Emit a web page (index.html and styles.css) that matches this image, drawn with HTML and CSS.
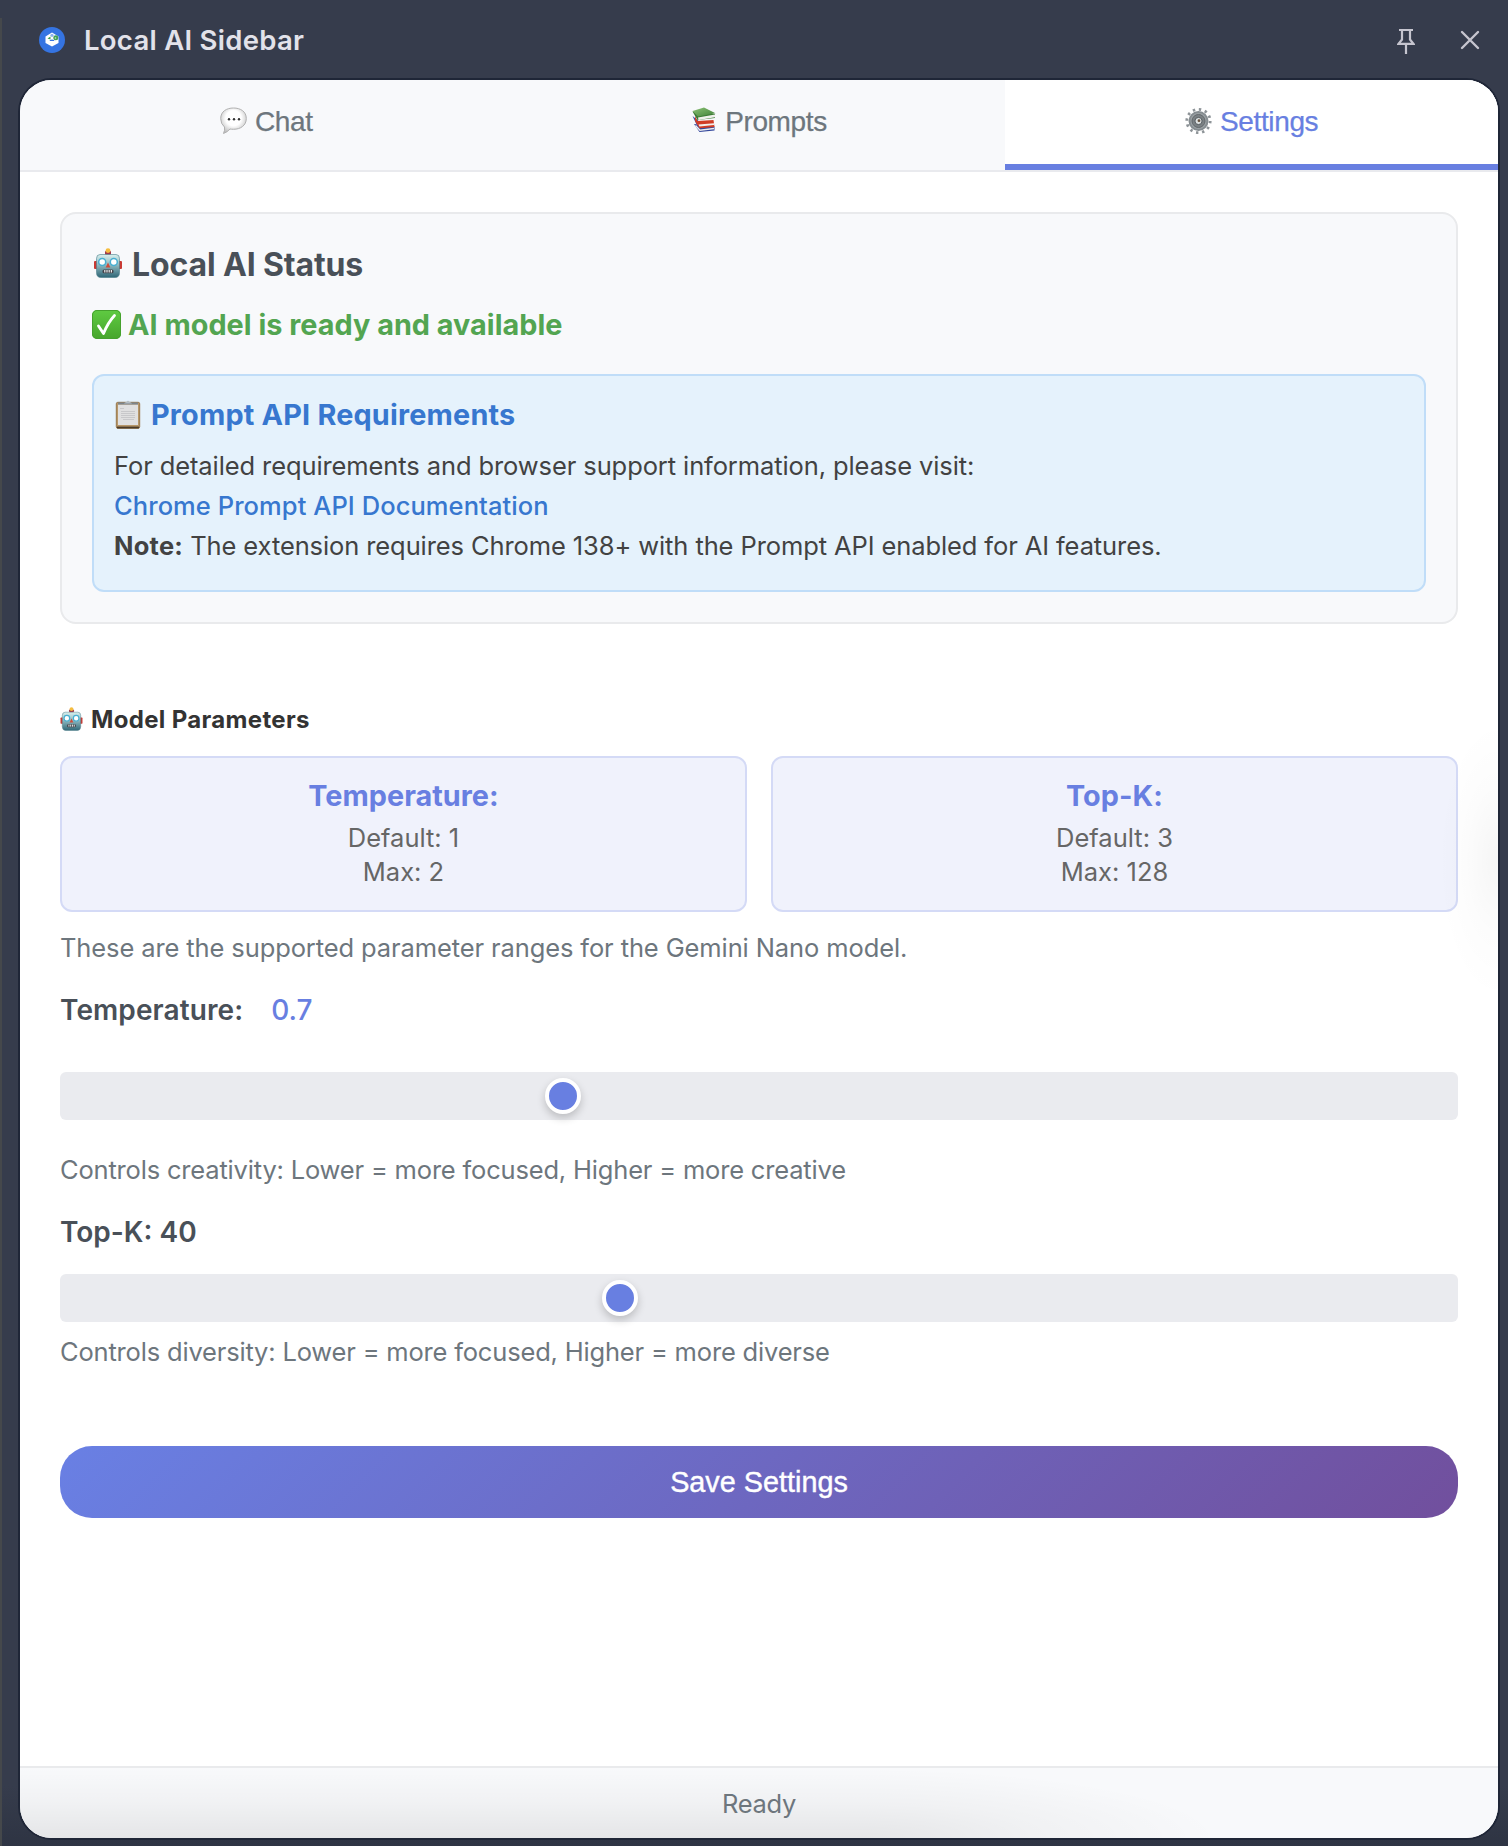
FILE: index.html
```
<!DOCTYPE html>
<html lang="en">
<head>
<meta charset="utf-8">
<title>Local AI Sidebar</title>
<link rel="stylesheet" href="styles.css">
</head>
<body>
<svg class="defs" width="0" height="0">
  <defs>
    <linearGradient id="face" x1="0" y1="0" x2="0" y2="1"><stop offset="0" stop-color="#d9f0ee"/><stop offset=".45" stop-color="#8fb9c0"/><stop offset="1" stop-color="#2f6676"/></linearGradient>
    <linearGradient id="green" x1="0" y1="0" x2="0" y2="1"><stop offset="0" stop-color="#5fcb42"/><stop offset="1" stop-color="#47a52c"/></linearGradient>
    <radialGradient id="bubble" cx=".5" cy=".4" r=".6"><stop offset=".5" stop-color="#fff"/><stop offset="1" stop-color="#c0c0c0"/></radialGradient>
    <linearGradient id="book" x1="0" y1="0" x2="1" y2="1"><stop offset="0" stop-color="#8cc276"/><stop offset="1" stop-color="#3f8136"/></linearGradient>
    <symbol id="robot" viewBox="0 0 28 30">
      <rect x="0" y="13" width="4" height="8" rx="1" fill="#c93a34"/><rect x="24" y="13" width="4" height="8" rx="1" fill="#c93a34"/>
      <rect x="11" y="3" width="6" height="4" rx="1" fill="#a23a4a"/><circle cx="14" cy="2.6" r="2.4" fill="#f5bd3e"/>
      <path d="M6 6.5h16q3.500 0 3.500 4v14q0 5-4.500 5h-14q-4.500 0-4.500-5v-14q0-4 3.500-4z" fill="url(#face)" stroke="#4b7d89" stroke-width=".6"/>
      <circle cx="8.200" cy="14" r="3.500" fill="#fff" stroke="#48afd2" stroke-width="1.500"/><circle cx="19.800" cy="14" r="3.500" fill="#fff" stroke="#48afd2" stroke-width="1.500"/>
      <path d="M14 14.500l2.300 5h-4.600z" fill="#d04a38"/>
      <rect x="8.500" y="21.500" width="11" height="3.800" rx="1.500" fill="#44434a"/><path d="M10.800 22v2.600M13 22v2.600M15.200 22v2.600M17.400 22v2.600" stroke="#e9eeee" stroke-width="1.200"/>
    </symbol>
  </defs>
</svg>

<div class="window">
  <header class="titlebar">
    <svg class="logo" viewBox="0 0 26 26"><circle cx="13" cy="13" r="13" fill="#3574e2"/><path d="M13 5.500l6.500 4v6.500L13 19.500 6.500 16V9.500z" fill="#fff"/><circle cx="13" cy="8.300" r="1.600" fill="#8bb3ee"/><path d="M11.500 9.500v3l-3-1z" fill="#3b9a50"/><circle cx="16.800" cy="10.700" r="2.500" fill="#43a057"/><circle cx="16.500" cy="11" r=".8" fill="#cfe8d4"/><path d="M10.500 14q0-1.500 2.500-1.500t2.500 1.500z" fill="#3574e2"/></svg>
    <h1 class="title">Local AI Sidebar</h1>
    <svg class="pin" viewBox="0 0 18 27"><path d="M2 2h14M5 2v9.500l-3.500 4.300h15L13 11.500V2M9 16V26" fill="none" stroke="#c6c5cf" stroke-width="2.200"/></svg>
    <svg class="close" viewBox="0 0 20 20"><path d="M2 2l16 16M18 2L2 18" stroke="#c6c5cf" stroke-width="2.400" stroke-linecap="round"/></svg>
  </header>

  <main class="panel">
    <nav class="tabs">
      <a class="tab">
        <svg class="tab-icon" viewBox="0 0 27 28"><path d="M13.500 1C20.500 1 26.300 4.500 26.300 11.500S20.500 22.300 13.500 22.300q-2 0-3.500-.3-2.500 3-6.500 4.500 1.500-3 1-6.500Q.700 17 .700 11.500C.700 4.500 6.500 1 13.500 1z" fill="url(#bubble)" stroke="#b0b0b0"/><circle cx="9" cy="12.300" r="1.200" fill="#333"/><circle cx="14" cy="12.300" r="1.200" fill="#333"/><circle cx="19" cy="12.300" r="1.200" fill="#333"/></svg>
        <span>Chat</span>
      </a>
      <a class="tab">
        <svg class="tab-icon tab-icon-books" viewBox="0 0 24 26"><path d="M2 17l5.500 8 15-1.500v-4z" fill="#33479c"/><path d="M3.500 18.500l4.500 4.700 14-1.700" fill="none" stroke="#eee" stroke-width="1.400"/><path d="M.500 9l4 8.500 4-2z" fill="#3b50a5"/><path d="M3 9l2.500 5 16-1 1 7-15 1.200L3 14z" fill="#d13c25"/><path d="M6.500 17.500l15.500-1.200v1.800L7.500 19.500z" fill="#f3eeea"/><path d="M.500 4.500l5 8.500 17.500-2V7z" fill="#3c7b35"/><path d="M6 10.500l17-3v2.800L6.500 13z" fill="#f0f1eb"/><path d="M.500 4L12 .500l11.500 5.800L6 9.500z" fill="url(#book)"/></svg>
        <span>Prompts</span>
      </a>
      <a class="tab tab-active">
        <svg class="tab-icon" viewBox="0 0 27 27"><circle cx="13.500" cy="13.500" r="11.700" fill="none" stroke="#8e9498" stroke-width="2.800" stroke-dasharray="2.400 3.726"/><circle cx="13.500" cy="13.500" r="9" fill="#9da3a6" stroke="#858c90" stroke-width="2"/><circle cx="13.500" cy="13.500" r="6.500" fill="#7b8184" stroke="#62686c"/><circle cx="13.500" cy="13.500" r="3.600" fill="#dce0e0" stroke="#555c60"/><circle cx="14" cy="13.200" r="1.400" fill="#67523e"/></svg>
        <span>Settings</span>
      </a>
    </nav>

    <div class="content">
      <section class="status-card">
        <h2 class="status-heading"><svg class="icon-robot" viewBox="0 0 28 30"><use href="#robot"/></svg><span>Local AI Status</span></h2>
        <p class="status-line"><svg class="icon-check" viewBox="0 0 29 29"><rect width="29" height="29" rx="5" fill="url(#green)"/><rect x=".5" y=".5" width="28" height="28" rx="4.500" fill="none" stroke="#45a12d"/><path d="M6.500 16l5 7.500Q16 12.500 22.500 5.500" fill="none" stroke="#fff" stroke-width="2.800" stroke-linecap="round" stroke-linejoin="round"/></svg><span>AI model is ready and available</span></p>
        <div class="requirements">
          <h3 class="req-title"><svg class="icon-clip" viewBox="0 0 26 29"><rect x="1.300" y="2.300" width="23.400" height="26" rx="1.500" fill="#b79769" stroke="#98774b"/><rect x="3" y="4.500" width="20" height="20.500" fill="#e0e0e0"/><path d="M2 27.500h22" stroke="#4b3a27" stroke-width="1.800"/><path d="M5 8.500h4M6 11.500h14M6 13.500h14M6 15.500h14M6 17.500h14M8 19.500h11" stroke="#c8c8ca"/><path d="M3 2.500h20v2H3z" fill="#7c858c"/><path d="M9 3.500q1-1.500 2.500-1.500 1.500-2.500 3 0 1.500 0 2.500 1.500z" fill="#b5bec4"/></svg><span>Prompt API Requirements</span></h3>
          <p class="req-text req-intro">For detailed requirements and browser support information, please visit:</p>
          <p class="req-text"><a class="req-link">Chrome Prompt API Documentation</a></p>
          <p class="req-text req-note"><strong>Note:</strong> The extension requires Chrome 138+ with the Prompt API enabled for AI features.</p>
        </div>
      </section>

      <h2 class="section-title"><svg class="icon-robot-small" viewBox="0 0 28 30"><use href="#robot"/></svg><span>Model Parameters</span></h2>
      <div class="params">
        <div class="param">
          <strong class="param-name">Temperature:</strong>
          <span class="param-value">Default: 1</span>
          <span class="param-value">Max: 2</span>
        </div>
        <div class="param">
          <strong class="param-name">Top-K:</strong>
          <span class="param-value">Default: 3</span>
          <span class="param-value">Max: 128</span>
        </div>
      </div>
      <p class="help help-ranges">These are the supported parameter ranges for the Gemini Nano model.</p>

      <div class="label"><span>Temperature:</span><span class="label-value">0.7</span></div>
      <div class="slider slider-temp"><span class="thumb" style="margin-left:485px"></span></div>
      <p class="help">Controls creativity: Lower = more focused, Higher = more creative</p>

      <div class="label label-topk">Top-K: 40</div>
      <div class="slider slider-topk"><span class="thumb" style="margin-left:542px"></span></div>
      <p class="help">Controls diversity: Lower = more focused, Higher = more diverse</p>

      <button class="save">Save Settings</button>
    </div>

    <footer class="statusbar">Ready</footer>
  </main>
</div>
</body>
</html>
```
FILE: styles.css
```
* { box-sizing: border-box; }
body { margin: 0; font-family: Inter, "Liberation Sans", sans-serif; }
h1, h2, h3, p { margin: 0; }
svg { display: block; flex: none; }
.defs { position: absolute; }

.window {
  height: 1846px;
  padding: 0 8px 6px 18px;
  display: flex;
  flex-direction: column;
  background:
    linear-gradient(#45484b, #45484b) 0 18px / 2px 100% no-repeat,
    linear-gradient(to top, #2e3443, #363c4c 60px);
}
.titlebar {
  height: 78px;
  padding: 2px 20px 0 21px;
  display: flex;
  align-items: center;
}
.logo { width: 26px; height: 26px; }
.title { flex: 1; margin-left: 19px; font-size: 27.500px; font-weight: 560; letter-spacing: .28px; line-height: 40px; color: #e2e2ea; }
.pin { width: 18px; height: 27px; margin: 2px 45px 0 0; }
.close { width: 20px; height: 20px; }

.panel {
  position: relative;
  flex: 1;
  display: flex;
  flex-direction: column;
  border: 2px solid #1f2637;
  border-radius: 34px;
  background: #fff;
  overflow: hidden;
}
/* soft window shadow along the right edge */
.panel::after {
  content: "";
  position: absolute;
  right: 0;
  top: 640px;
  width: 60px;
  height: 280px;
  background: radial-gradient(ellipse 60px 140px at 100% 50%, rgba(0,0,0,.04), rgba(0,0,0,.012) 55%, transparent);
}

.tabs { height: 92px; flex: none; display: grid; grid-template-columns: repeat(3, 1fr); border-bottom: 2px solid #e9eaee; background: #f8f9fb; }
.tab { display: flex; justify-content: center; align-items: flex-start; gap: 8px; padding-top: 26px; font-family: "Liberation Sans", Arial, sans-serif; font-size: 28px; letter-spacing: -.38px; line-height: 32px; color: #6d767d; -webkit-text-stroke: .25px currentColor; }
.tab-icon { width: 27px; height: 28px; margin-top: 1px; }
.tab-icon-books { width: 24px; height: 26px; margin: 1px 1px 0 1px; }
.tab-active { background: #fff; border-bottom: 6px solid #687fe1; color: #687fe1; }

.content { flex: 1; padding: 40px; }

.status-card { padding: 31px 30px 30px; border: 2px solid #e9eaec; border-radius: 16px; background: #f8f9fb; }
.status-heading { display: flex; align-items: center; gap: 10px; padding-left: 2px; font-size: 32px; font-weight: 700; letter-spacing: -.13px; line-height: 40px; color: #495058; }
.icon-robot { width: 28px; height: 30px; margin-top: -4px; }
.status-line { display: flex; align-items: center; gap: 7px; margin: 20px 0 29px; font-size: 28.800px; font-weight: 700; letter-spacing: .02px; line-height: 40px; color: #53a551; }
.icon-check { width: 29px; height: 29px; margin-top: -1px; }
.requirements { padding: 19px 20px 24px; border: 2px solid #c0ddf8; border-radius: 12px; background: #e5f2fc; color: #424242; }
.req-title { display: flex; align-items: center; gap: 10px; margin-bottom: 11px; padding-left: 1px; font-size: 28.800px; font-weight: 700; letter-spacing: .2px; line-height: 40px; color: #3777cf; }
.icon-clip { width: 26px; height: 29px; margin-top: -2px; }
.req-text { font-size: 25.500px; line-height: 40px; white-space: nowrap; }
.req-intro, .req-note { letter-spacing: -.1px; }
.req-note strong { letter-spacing: .25px; }
.req-link { font-weight: 500; letter-spacing: .07px; color: #3777cf; }

.section-title { display: flex; align-items: center; gap: 8px; margin: 81px 0 21px; font-size: 24px; font-weight: 700; letter-spacing: .33px; line-height: 30px; color: #333; }
.icon-robot-small { width: 23px; height: 24px; margin-top: -2px; }
.params { display: grid; grid-template-columns: 1fr 1fr; gap: 24px; }
.param { display: flex; flex-direction: column; align-items: center; height: 156px; padding-top: 20px; border: 2px solid #d4daf6; border-radius: 12px; background: #f0f2fc; }
.param-name { margin-bottom: 7px; font-size: 28.800px; font-weight: 700; letter-spacing: .03px; line-height: 36px; color: #687fe1; }
.param-value { font-size: 25.500px; line-height: 34px; color: #666; }

.help { font-size: 25.500px; letter-spacing: -.18px; line-height: 36px; color: #6d767d; white-space: nowrap; }
.help-ranges { margin-top: 18px; letter-spacing: -.11px; }
.label { display: flex; gap: 28px; margin-top: 26px; font-size: 28px; font-weight: 570; letter-spacing: .1px; line-height: 36px; color: #495058; }
.label-topk { letter-spacing: 0; }
.label-value { font-weight: 500; letter-spacing: 0; color: #687fe1; }
.slider { height: 48px; display: flex; align-items: center; border-radius: 6px; background: #eaebef; }
.slider-temp { margin: 44px 0 32px; }
.slider-topk { margin: 24px 0 12px; }
.thumb { width: 36px; height: 36px; border: 4px solid #fff; border-radius: 50%; background: #687fe1; box-shadow: 0 4px 8px rgba(0,0,0,.2); }

.save { display: block; width: 100%; height: 72px; margin-top: 76px; padding: 0; border: 0; border-radius: 32px; background: linear-gradient(135deg, #6980e4, #714f9d); color: #fff; font-family: "Liberation Sans", Arial, sans-serif; font-size: 28.800px; -webkit-text-stroke: .4px #fff; }

.statusbar {
  height: 72px;
  flex: none;
  border-top: 2px solid #e9eaec;
  background:
    radial-gradient(ellipse 360px 70px at 0 100%, rgba(0,0,0,.08), rgba(0,0,0,.03) 50%, transparent) 840px 0 / 638px 100% no-repeat,
    linear-gradient(to top, rgba(0,0,0,.08), rgba(0,0,0,.03) 50%, transparent) 0 0 / 840px 100% no-repeat,
    #f8f9fb;
  font-size: 25.500px;
  letter-spacing: -.3px;
  line-height: 72px;
  text-align: center;
  color: #6d767d;
}
```
